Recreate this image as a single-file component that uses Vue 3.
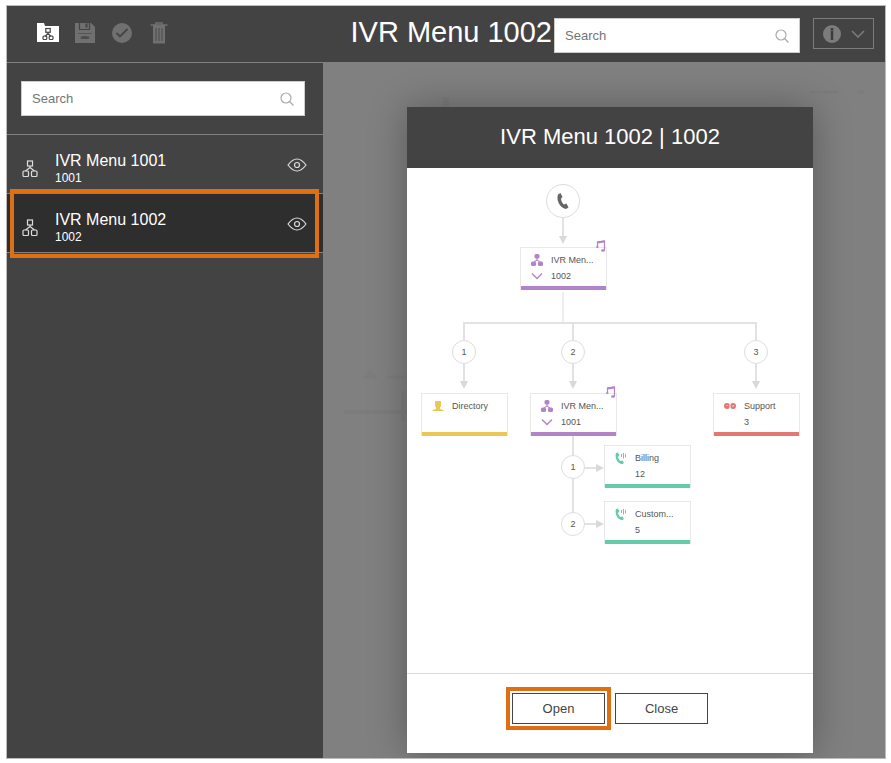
<template>
  <div class="app">
    <header class="toolbar">
      <div class="toolbar__actions">
        <button class="icon-button" aria-label="Menus">
          <svg width="22" height="22" viewBox="0 0 22 22">
            <path fill="#fff" d="M0 1h7l1 3h14v16H0z" />
            <g fill="none" stroke="#444" stroke-width="1.2">
              <rect x="8.8" y="6.500" width="4.400" height="3.800" />
              <path d="M11 10.500v2.500M11 11.500l-3 3M11 11.500l3 3" />
              <rect x="6" y="14" width="3.800" height="3.500" rx="1" />
              <rect x="12.200" y="14" width="3.800" height="3.500" rx="1" />
            </g>
          </svg>
        </button>
        <button class="icon-button" aria-label="Save" disabled>
          <svg width="22" height="22" viewBox="0 0 22 22">
            <path fill="currentColor" d="M1 1h16l4 4v16H1z" />
            <path d="M5.500 1v6.500h10V1" fill="none" stroke="#444" stroke-width="1.200" />
            <path d="M12.500 1.500v4" stroke="#444" stroke-width="2" />
            <path d="M4 11.500h14" stroke="#555" />
            <ellipse cx="11" cy="15.500" rx="4.500" ry="1.500" fill="#4c4c4c" />
          </svg>
        </button>
        <button class="icon-button" aria-label="Approve" disabled>
          <svg width="22" height="22" viewBox="0 0 22 22">
            <circle cx="11" cy="11" r="10" fill="currentColor" />
            <path d="M5.500 11l3.500 3.500 7.500-7.500" fill="none" stroke="#444" stroke-width="1.800" />
          </svg>
        </button>
        <button class="icon-button" aria-label="Delete" disabled>
          <svg width="22" height="22" viewBox="0 0 22 22">
            <path d="M2.500 3h17M8 3V1h6v2" fill="none" stroke="currentColor" stroke-width="1.500" />
            <path d="M5 3h12v18.500H5z" fill="currentColor" />
            <path d="M8 6v13M11 6v13M14 6v13" stroke="#4a4a4a" />
          </svg>
        </button>
      </div>
      <h1 class="toolbar__title">IVR Menu 1002</h1>
      <label class="search search--toolbar">
        <input v-model="menuSearch" type="text" placeholder="Search" aria-label="Search menu" />
        <svg class="search__icon" width="14" height="14" viewBox="0 0 14 14">
          <circle cx="6" cy="6" r="5" />
          <path d="M9.500 9.500l4 4" />
        </svg>
      </label>
      <button class="info-button" aria-label="Information">
        <svg width="18" height="18" viewBox="0 0 18 18">
          <circle cx="9" cy="9" r="9" fill="#7c7c7c" />
          <path d="M9 3v12" stroke="#3c3c3c" stroke-width="2.500" />
          <path d="M8 5.500h2" stroke="#5c5c5c" stroke-width="0.800" />
        </svg>
        <svg width="14" height="8" viewBox="0 0 14 8">
          <path d="M1 1l6 6 6-6" fill="none" stroke="#7c7c7c" stroke-width="1.500" />
        </svg>
      </button>
    </header>

    <div class="body">
      <aside class="sidebar">
        <div class="sidebar__search">
          <label class="search">
            <input v-model="listSearch" type="text" placeholder="Search" aria-label="Search list" />
            <svg class="search__icon" width="14" height="14" viewBox="0 0 14 14">
              <circle cx="6" cy="6" r="5" />
              <path d="M9.500 9.500l4 4" />
            </svg>
          </label>
        </div>
        <ul class="menu-list">
          <li
            v-for="menu in menus"
            :key="menu.extension"
            :class="['menu-item', { 'menu-item--selected': menu.extension === selected }]"
          >
            <svg class="menu-item__icon" width="16" height="18" viewBox="0 0 16 18">
              <g fill="none" stroke="#ddd" stroke-width="1.200">
                <rect x="5.500" y="1" width="5" height="5" />
                <path d="M8 6v2.500M8 7.500L3.500 11M8 7.500l4.500 3.500" />
                <rect x="1" y="11" width="5.500" height="5.500" rx="1" />
                <rect x="9.500" y="11" width="5.500" height="5.500" rx="1" />
              </g>
            </svg>
            <div class="menu-item__text">
              <div class="menu-item__name">{{ menu.name }}</div>
              <div class="menu-item__extension">{{ menu.extension }}</div>
            </div>
            <button
              class="menu-item__preview"
              :aria-label="`Preview ${menu.name}`"
              @click="selected = menu.extension"
            >
              <svg width="20" height="14" viewBox="0 0 20 14">
                <g fill="none" stroke="#ddd" stroke-width="1.200">
                  <path d="M1 7q9-12 18 0q-9 12-18 0z" />
                  <circle cx="10" cy="7" r="2.500" />
                </g>
              </svg>
            </button>
          </li>
        </ul>
      </aside>

      <main class="workspace">
        <svg class="workspace__flow" width="561" height="696" viewBox="0 0 561 696">
          <path d="M21 349h64M80 328v30" stroke-width="4" />
          <path d="M42 314l5-5 5 5zM64 314h20M487 29h28M536 29h5" stroke-width="3" />
          <path d="M123 34v10" stroke-width="6" />
        </svg>
        <section class="dialog" role="dialog" aria-labelledby="dialog-title">
          <h2 id="dialog-title" class="dialog__title">IVR Menu 1002 | 1002</h2>
          <div class="dialog__content">
            <div class="flow">
              <svg class="flow__lines" width="378" height="362" viewBox="0 0 378 362">
                <g fill="none" stroke="#e2e2e2" stroke-width="2">
                  <path d="M142 34v20" />
                  <path d="M142 108v31" stroke="#eee" />
                  <path d="M43 200V139h292v61M152 139v61M152 252v88h24M152 284h24" />
                </g>
                <g fill="#d9d9d9">
                  <path d="M138 52h8l-4 8z" />
                  <path d="M39 197h8l-4 8zM148 197h8l-4 8zM331 197h8l-4 8z" />
                  <path d="M175 280v8l8-4zM175 336v8l8-4z" />
                </g>
              </svg>
              <div class="flow__start">
                <svg width="14" height="18" viewBox="0 0 14 18">
                  <path
                    fill="#666"
                    d="M4.500 1L2 2.500C0 8 3.500 15.500 10 17l2.500-1.500-2-4-2.500 1C6 11 5 8.500 5 6.500l1.500-1.500z"
                  />
                </svg>
              </div>
              <div
                v-for="step in steps"
                :key="step.id"
                class="flow__step"
                :style="{ left: `${step.x}px`, top: `${step.y}px` }"
              >
                {{ step.key }}
              </div>
              <div
                v-for="node in nodes"
                :key="node.id"
                :class="['node', `node--${node.type}`]"
                :style="{ left: `${node.x}px`, top: `${node.y}px` }"
              >
                <div class="node__row">
                  <svg class="node__icon" width="12" height="12" viewBox="0 0 12 12" fill="currentColor">
                    <template v-if="node.type === 'menu'">
                      <rect x="3.500" y="0" width="5" height="4.500" rx="1.500" />
                      <path d="M5.500 4h1v1.500l3 2.500h-1.500L6 6.500 4 8H2.500l3-2.500z" />
                      <rect x="0" y="7.500" width="5" height="4.500" rx="1.500" />
                      <rect x="7" y="7.500" width="5" height="4.500" rx="1.500" />
                    </template>
                    <template v-else-if="node.type === 'directory'">
                      <path d="M3 1h6v5L8 7.500v1.500l3.500 1V11H.5v-1L4 9V7.500L3 6z" />
                    </template>
                    <template v-else-if="node.type === 'voicemail'">
                      <circle cx="3" cy="6" r="3" />
                      <circle cx="9" cy="6" r="3" />
                      <path d="M6 4v5M3 5v1M9.500 5L8.500 7" stroke="#fff" stroke-width="0.800" />
                    </template>
                    <template v-else>
                      <path d="M1 1l2-.5L4.500 3.500 3 5C3.500 7 4.500 8.500 5.500 9l2-.5L9 11l-1.500 1C2.500 12-.5 6 1 1z" />
                      <path d="M6.500 2v3M8.500 1v5.500M10.500 2v3.500" stroke="currentColor" />
                    </template>
                  </svg>
                  <span>{{ node.name }}</span>
                </div>
                <div class="node__row">
                  <svg class="node__icon" width="12" height="12" viewBox="0 0 12 12">
                    <path
                      v-if="node.type === 'menu'"
                      d="M1 3.500l5 5 5-5"
                      fill="none"
                      stroke="currentColor"
                      stroke-width="1.400"
                    />
                  </svg>
                  <span>{{ node.number }}</span>
                </div>
                <svg
                  v-if="node.type === 'menu'"
                  class="node__music"
                  width="10"
                  height="12"
                  viewBox="0 0 10 12"
                >
                  <path d="M1.500 6V2l7-1v9" fill="none" stroke="currentColor" stroke-width="1.200" />
                  <path d="M1.500 2.500l7-1" stroke="currentColor" stroke-width="2" />
                  <ellipse cx="7" cy="10.500" rx="2" ry="1.300" fill="currentColor" />
                  <ellipse cx="1.300" cy="7" rx="1.300" ry="1" fill="currentColor" />
                </svg>
              </div>
            </div>
          </div>
          <footer class="dialog__footer">
            <button class="button button--highlighted">Open</button>
            <button class="button">Close</button>
          </footer>
        </section>
      </main>
    </div>
  </div>
</template>

<script setup>
import { ref } from "vue";

const menuSearch = ref("");
const listSearch = ref("");
const selected = ref("1002");

const menus = [
  { name: "IVR Menu 1001", extension: "1001" },
  { name: "IVR Menu 1002", extension: "1002" },
];

const steps = [
  { id: 1, key: "1", x: 31, y: 156 },
  { id: 2, key: "2", x: 140, y: 156 },
  { id: 3, key: "3", x: 323, y: 156 },
  { id: 4, key: "1", x: 140, y: 271 },
  { id: 5, key: "2", x: 140, y: 328 },
];

const nodes = [
  { id: 1, type: "menu", name: "IVR Men...", number: "1002", x: 99, y: 63 },
  { id: 2, type: "directory", name: "Directory", number: "", x: 0, y: 209 },
  { id: 3, type: "menu", name: "IVR Men...", number: "1001", x: 109, y: 209 },
  { id: 4, type: "voicemail", name: "Support", number: "3", x: 292, y: 209 },
  { id: 5, type: "queue", name: "Billing", number: "12", x: 183, y: 261 },
  { id: 6, type: "queue", name: "Custom...", number: "5", x: 183, y: 317 },
];
</script>

<style>
body {
  background: #fff;
}
</style>

<style scoped>
.app,
.app * {
  box-sizing: border-box;
}

.app {
  display: flex;
  flex-direction: column;
  min-height: calc(100vh - 9px);
  margin: 5px 5px 4px 6px;
  border: 1px solid #bbb;
  font-family: "Liberation Sans", Arial, sans-serif;
  color: #fff;
}

button {
  padding: 0;
  font: inherit;
  border: none;
  background: none;
  cursor: pointer;
}

svg {
  display: block;
}

.toolbar {
  display: flex;
  align-items: flex-start;
  height: 57px;
  padding: 12px 11px 0 30px;
  background: #434343;
  border-bottom: 1px solid #808080;
}

.toolbar__actions {
  display: flex;
  flex: 1;
  gap: 15px;
  margin-top: 4px;
}

.icon-button {
  color: #707070;
}

.toolbar__title {
  margin: 0 2px 0 0;
  font-size: 29px;
  font-weight: 400;
  line-height: 28px;
}

.search {
  display: flex;
  align-items: center;
  height: 35px;
  padding: 0 10px;
  background: #fff;
  border: 1px solid #ccc;
}

.search--toolbar {
  width: 246px;
  margin-right: 13px;
}

.search input {
  flex: 1;
  min-width: 0;
  padding: 0;
  font: 13px "Liberation Sans", Arial, sans-serif;
  color: #444;
  background: none;
  border: none;
  outline: none;
}

.search input::placeholder {
  color: #757575;
}

.search__icon {
  fill: none;
  stroke: #aaa;
  stroke-width: 1.2;
}

.info-button {
  display: flex;
  align-items: center;
  justify-content: center;
  gap: 10px;
  width: 61px;
  height: 31px;
  border: 1px solid #7c7c7c;
}

.body {
  display: flex;
  flex: 1;
}

.sidebar {
  width: 316px;
  background: #434343;
}

.sidebar__search {
  padding: 18px 18px 18px 14px;
  border-bottom: 1px solid #808080;
}

.menu-list {
  margin: 0;
  padding: 0;
  list-style: none;
}

.menu-item {
  position: relative;
  display: flex;
  align-items: center;
  height: 59px;
  padding: 0 16px 0 15px;
  border-bottom: 1px solid #808080;
}

.menu-item--selected {
  background: #2e2e2e;
}

.menu-item--selected::after {
  content: "";
  position: absolute;
  inset: -5px 4px -6px 3px;
  border: 4px solid #de6f12;
  pointer-events: none;
}

.menu-item__icon {
  margin: 9px 17px 0 0;
}

.menu-item__text {
  flex: 1;
  padding-top: 10px;
}

.menu-item__name {
  font-size: 16px;
  line-height: 18px;
}

.menu-item__extension {
  font-size: 12px;
  line-height: 16px;
}

.menu-item__preview {
  margin-top: 2px;
}

.workspace {
  position: relative;
  display: flex;
  flex: 1;
  padding: 44px 72px 5px 84px;
  background: #808080;
  overflow: hidden;
}

.workspace__flow {
  position: absolute;
  top: 0;
  left: 0;
  fill: none;
  stroke: #7c7c7c;
}

.dialog {
  position: relative;
  display: flex;
  flex: 1;
  flex-direction: column;
  background: #fff;
  box-shadow: 0 0 36px rgba(0, 0, 0, 0.3);
}

.dialog__title {
  height: 61px;
  margin: 0;
  font-size: 22px;
  font-weight: 400;
  line-height: 59px;
  text-align: center;
  background: #434343;
}

.dialog__content {
  flex: 1;
  padding: 16px 14px;
}

.flow {
  position: relative;
  width: 378px;
  height: 362px;
  margin: 0 auto;
  color: #555;
  font-size: 9px;
}

.flow__lines {
  position: absolute;
  top: 0;
  left: 0;
}

.flow__start,
.flow__step {
  position: absolute;
  display: flex;
  align-items: center;
  justify-content: center;
  background: #fff;
  border: 1px solid #ddd;
  border-radius: 50%;
}

.flow__start {
  top: 0;
  left: 125px;
  width: 34px;
  height: 34px;
}

.flow__step {
  width: 24px;
  height: 24px;
}

.node {
  position: absolute;
  width: 87px;
  height: 43px;
  padding: 4px 8px 0 10px;
  background: #fff;
  border: 1px solid #e8e8e8;
  border-bottom: none;
  box-shadow: inset 0 -4px currentColor;
}

.node__row {
  display: flex;
  align-items: center;
  height: 16px;
}

.node__row span {
  color: #555;
  white-space: nowrap;
}

.node__icon {
  flex: none;
  margin-right: 8px;
}

.node__music {
  position: absolute;
  top: -8px;
  right: 0;
}

.node--menu {
  color: #b283c6;
}

.node--directory {
  color: #edc756;
}

.node--voicemail {
  color: #e37773;
}

.node--queue {
  color: #66cbab;
}

.dialog__footer {
  display: flex;
  align-items: center;
  justify-content: center;
  gap: 10px;
  height: 80px;
  padding-bottom: 10px;
  border-top: 1px solid #ddd;
}

.button {
  width: 93px;
  height: 31px;
  font-size: 13px;
  color: #444;
  background: #fff;
  border: 1px solid #444;
}

.button--highlighted {
  outline: 4px solid #de6f12;
  outline-offset: 2px;
}
</style>
